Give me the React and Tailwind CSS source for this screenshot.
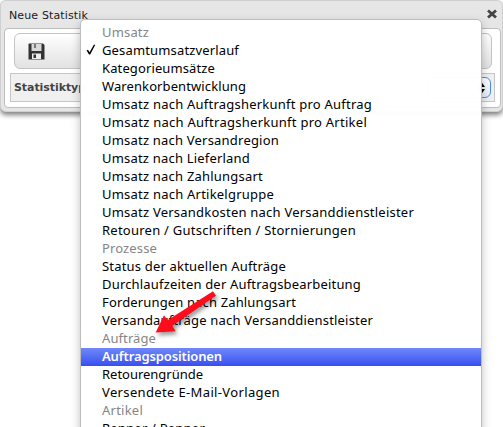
import React from "react";

const items = [
  ["Umsatz", "group", 46],
  ["Gesamtumsatzverlauf", "checked", 136],
  ["Kategorieumsätze", "", 112],
  ["Warenkorbentwicklung", "", 143],
  ["Umsatz nach Auftragsherkunft pro Auftrag", "", 269],
  ["Umsatz nach Auftragsherkunft pro Artikel", "", 264],
  ["Umsatz nach Versandregion", "", 176],
  ["Umsatz nach Lieferland", "", 147],
  ["Umsatz nach Zahlungsart", "", 160],
  ["Umsatz nach Artikelgruppe", "", 171],
  ["Umsatz Versandkosten nach Versanddienstleister", "", 311],
  ["Retouren / Gutschriften / Stornierungen", "", 253],
  ["Prozesse", "group", 54],
  ["Status der aktuellen Aufträge", "", 183],
  ["Durchlaufzeiten der Auftragsbearbeitung", "", 258],
  ["Forderungen nach Zahlungsart", "", 193],
  ["Versandaufträge nach Versanddienstleister", "", 270],
  ["Aufträge", "group", 53],
  ["Auftragspositionen", "active", 119],
  ["Retourengründe", "", 100],
  ["Versendete E-Mail-Vorlagen", "", 177],
  ["Artikel", "group", 40],
  ["Renner / Penner", "", 102],
];

const tone = {
  group: "text-[#858585]",
  checked: "text-black",
  active: "bg-gradient-to-b from-[#7088f8] to-[#3a4cf0] text-white font-semibold",
  "": "text-black",
};

// Spreads a label over its column width by letter spacing.
function Label({ text, width }) {
  const ref = React.useRef(null);
  const [gap, setGap] = React.useState(0);
  React.useLayoutEffect(() => {
    const natural = ref.current.getBoundingClientRect().width;
    setGap((width + 1 - natural) / text.length);
  }, [text, width]);
  return (
    <span ref={ref} className="whitespace-pre" style={{ letterSpacing: gap }}>
      {text}
    </span>
  );
}

function Row({ text, kind, width }) {
  return (
    <li className={`flex h-[18px] shrink-0 items-center pb-0.5 leading-[16px] ${tone[kind]}`}>
      <span className="flex w-[21px] shrink-0 justify-center pr-[2px]">
        {kind === "checked" && (
          <svg width="10" height="12" viewBox="0 0 10 12">
            <path d="M.6 6.5 2 5.8 3.6 8.2 7.8.8 9.3.8 4.2 10.6H3Z" fill="#000" />
          </svg>
        )}
      </span>
      <Label text={text} width={width} />
    </li>
  );
}

export default function App() {
  return (
    <div className="relative h-[427px] w-[503px] overflow-hidden bg-white font-['Noto_Sans','Open_Sans',sans-serif]">
      <section className="flex h-[112px] flex-col rounded-md border border-[#cfcfcf] bg-[#e6e6e6] pl-[3px] pr-px pb-[3px] shadow-[0_3px_5px_rgba(0,0,0,0.5)]">
        <header className="flex h-[27px] shrink-0 items-center justify-between pl-[5px] pr-[3px] pt-[3px] font-['DejaVu_Sans',Verdana,sans-serif] text-[11px] text-[#1a1a1a]">
          <Label text="Neue Statistik" width={78} />
          <svg width="12" height="12" viewBox="0 0 12 12" className="mb-[5px]">
            <path d="m2 2.5 8 7m0-7-8 7" stroke="#444" strokeWidth="2.8" />
          </svg>
        </header>
        <div className="flex grow flex-col rounded-sm border border-[#bdbdbd] bg-white px-[5px] pt-1">
          <div className="ml-1 mr-[3px] flex h-9 items-center rounded-md border border-[#c4c4c4] bg-gradient-to-b from-white to-[#e2e2e2] pl-[13px]">
            <svg width="17" height="17" viewBox="0 0 17 17">
              <path d="M1 .5h14l1.5 1.5v14.5H.5V1Z" fill="#333" />
              <path d="M3.5 1h10v7h-10Z" fill="#d9d9d9" />
              <path d="M6 1h2v4H6Z" fill="#777" />
              <path d="M4 10.5h9V16H4Z" fill="#eee" />
              <path d="M5.5 11.5h2.5V15H5.5Z" fill="#333" />
            </svg>
          </div>
          <div className="mt-1 flex h-[29px] items-center justify-between border border-[#c6c6c6] bg-[#f0f0f0] px-[3px] font-['DejaVu_Sans',Verdana,sans-serif] text-[11px] font-bold text-[#444]">
            <span className="pt-0.5">
              <Label text="Statistiktyp" width={71} />
            </span>
            <span className="flex h-[21px] w-16 items-center justify-end rounded-md border border-[#4b8ee8] bg-gradient-to-b from-white to-[#e4eefa] pr-[5px]">
              <svg width="7" height="12" viewBox="0 0 7 12">
                <path d="M3.5 0 7 5H0Zm0 12L0 7h7Z" fill="#000" />
              </svg>
            </span>
          </div>
        </div>
      </section>

      <ul className="absolute left-[80px] top-[19px] flex h-[430px] w-[402px] flex-col rounded-[5px] border border-[#bdbdbd] bg-white/98 pt-1 text-[13px] shadow-[0_4px_10px_rgba(0,0,0,0.25)]">
        {items.map(([text, kind, width]) => (
          <Row key={text} text={text} kind={kind} width={width} />
        ))}
      </ul>

      <svg className="absolute left-[150px] top-[285px] drop-shadow-[2px_3px_2px_rgba(0,0,0,0.4)]" width="75" height="55" viewBox="0 0 75 55">
        <path d="M63 6.3 66 10.7 22.3 40.7 25.7 46.2 5.7 47.4 14 30.2 17.5 35.3Z" fill="#fb0d1b" />
      </svg>
    </div>
  );
}
